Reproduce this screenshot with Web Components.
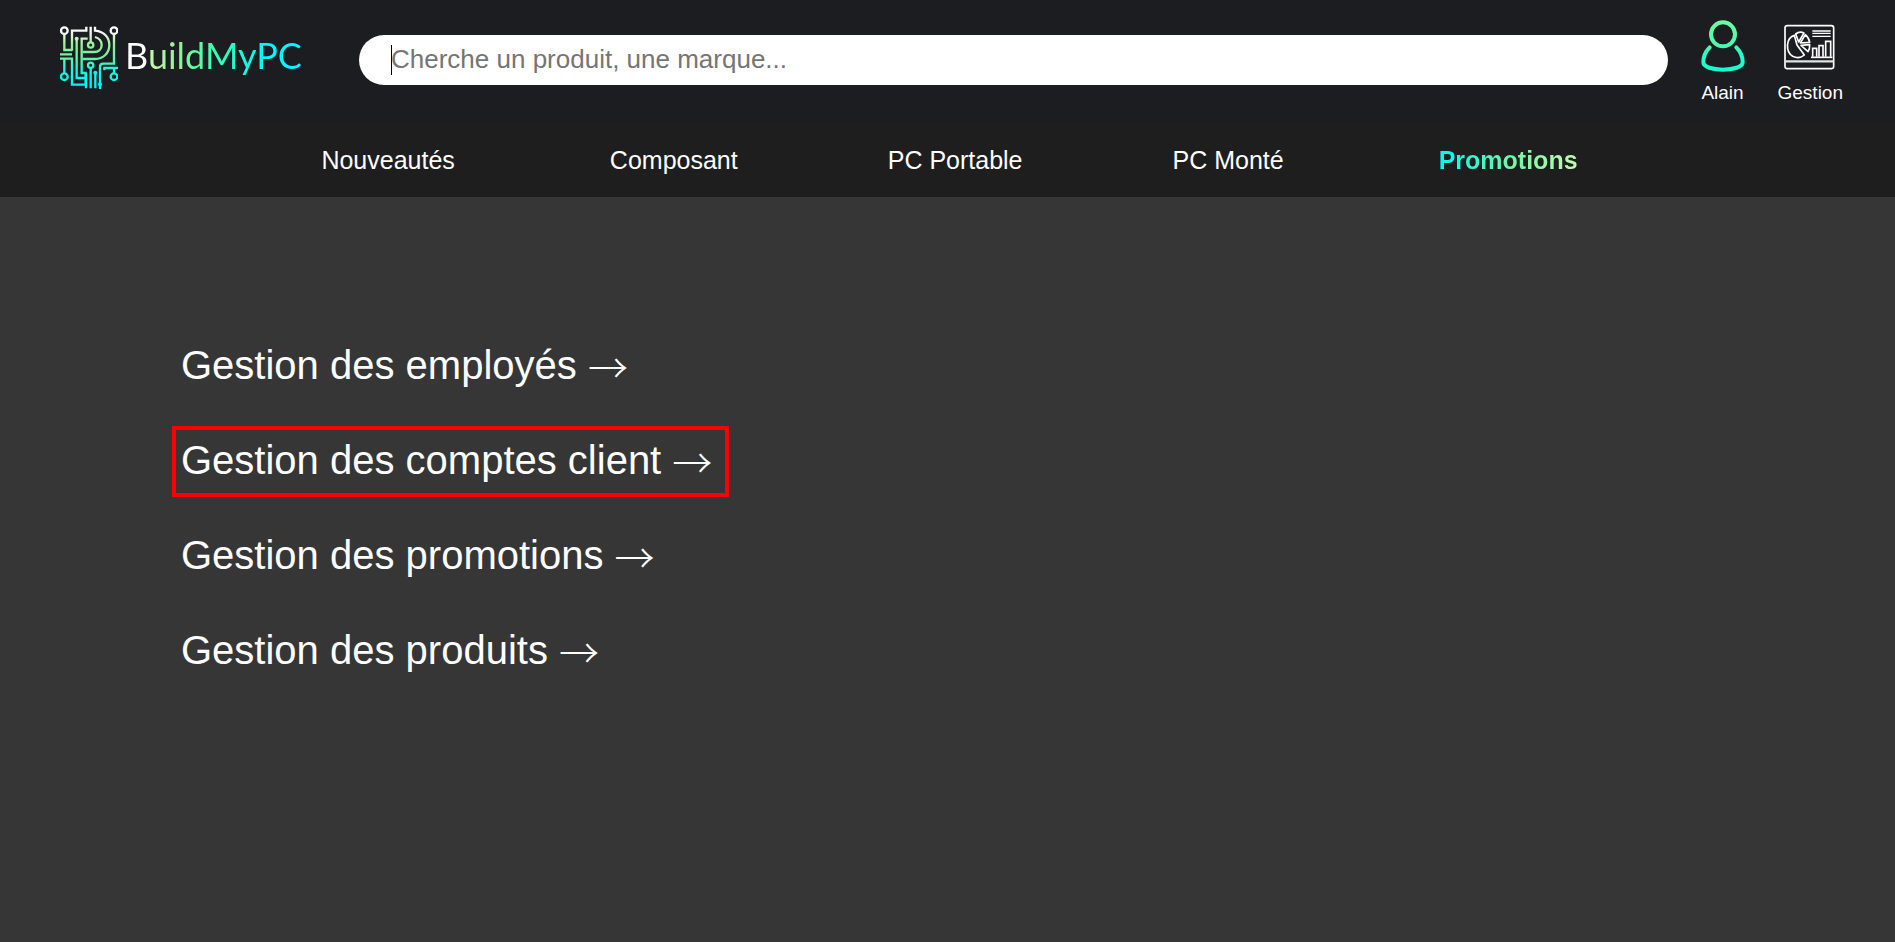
<!DOCTYPE html>
<html lang="fr">
<head>
<meta charset="utf-8">
<title>BuildMyPC – Gestion</title>
<style>
  html, body { margin: 0; min-height: 100%; background: #363636; color: #fff; font-family: Arial, "Liberation Sans", sans-serif; }
  .arrow { font-family: "Noto Sans CJK SC", sans-serif; font-weight: 300; line-height: 0; vertical-align: -4px; }
</style>
</head>
<body>
<site-header>
  <brand-logo slot="brand"></brand-logo>
  <product-search slot="search"></product-search>
  <header-action slot="actions" label="Alain">
    <svg width="44" height="52" viewBox="0 0 132 156" fill="none" stroke-width="12" stroke-linecap="round">
      <defs><linearGradient id="user-tint" gradientUnits="userSpaceOnUse" x1="0" y1="0" x2="0" y2="156"><stop offset="0" stop-color="#6dffa0"/><stop offset=".55" stop-color="#48f7b0"/><stop offset=".6" stop-color="#2affcb"/><stop offset="1" stop-color="#14ffcf"/></linearGradient></defs>
      <g stroke="url(#user-tint)"><circle cx="66" cy="43" r="36"/><path d="M26 82C14 94 7 112 7 127C7 141 35 149 66 149S125 141 125 127C125 112 118 94 106 82"/></g>
    </svg>
  </header-action>
  <header-action slot="actions" label="Gestion">
    <svg width="52" height="52" viewBox="0 0 156 156" fill="none" stroke="#fff">
      <rect x="3" y="17" width="146" height="129" rx="7" stroke-width="5"/>
      <path d="M3 124H149" stroke-width="7" stroke="#dce5df"/>
      <path d="M85 33H140M85 40H140M85 49H140" stroke-width="4"/>
      <path d="M81 112H145" stroke-width="5"/>
      <path d="M86 110V85H98V110M105 110V77H117V110M125 110V64H140V110" stroke-width="5"/>
      <g stroke-width="5" stroke-linejoin="round"><path d="M31 46C4 54 5 97 26 109C39 115 52 113 61 105L39 75Z"/><path d="M44 66L35 42Q46 33 60 39Z"/><path d="M49 69L64 44Q75 53 77 67Z"/><path d="M51 76L77 74Q78 87 72 95Z"/></g>
    </svg>
  </header-action>
</site-header>
<main-nav></main-nav>
<main>
  <admin-menu>
    <admin-link href="#employes">Gestion des employés <span class="arrow">→</span></admin-link>
    <admin-link href="#clients" highlighted>Gestion des comptes client <span class="arrow">→</span></admin-link>
    <admin-link href="#promotions">Gestion des promotions <span class="arrow">→</span></admin-link>
    <admin-link href="#produits">Gestion des produits <span class="arrow">→</span></admin-link>
  </admin-menu>
</main>

<script>
const define = (name, html, setup) => customElements.define(name, class extends HTMLElement {
  constructor() {
    super();
    this.attachShadow({ mode: "open" }).innerHTML = html;
  }
  connectedCallback() { if (setup) setup(this, this.shadowRoot); }
});

define("site-header", `
  <style>
    :host { display: block; background: #1c1d21; }
    header { display: flex; align-items: flex-start; box-sizing: border-box; min-height: 122px; padding: 20px 52px 16px 60px; }
    .search { flex: 1; margin: 15px 33px 0 57px; }
    .actions { display: flex; gap: 33px; }
  </style>
  <header>
    <slot name="brand"></slot>
    <div class="search"><slot name="search"></slot></div>
    <div class="actions"><slot name="actions"></slot></div>
  </header>`);

define("brand-logo", `
  <style>
    :host { display: block; flex: none; }
    a { display: flex; align-items: center; gap: 7px; padding-top: 6px; text-decoration: none; }
    svg { flex: none; }
    span { width: 177px; font: 36px/44px Lato, sans-serif; margin-bottom: 6px; color: transparent; background: linear-gradient(90deg, #fff 12%, #c3f7b0 13%, #8df58f 30%, #3dffb0 50%, #1effd0 62%, #00f8ff 78%); background-clip: text; -webkit-background-clip: text; }
  </style>
  <a href="#accueil">
    <svg width="58" height="63" viewBox="30 33 174 189" fill="none" aria-hidden="true">
      <defs><linearGradient id="g" gradientUnits="userSpaceOnUse" x1="0" y1="35" x2="0" y2="220"><stop offset="0" stop-color="#fff"/><stop offset=".1" stop-color="#f2f8f0"/><stop offset=".28" stop-color="#9af09a"/><stop offset=".5" stop-color="#66f5a4"/><stop offset=".7" stop-color="#1cf5dc"/><stop offset="1" stop-color="#00f2ff"/></linearGradient></defs>
      <g stroke="url(#g)" stroke-width="7">
        <circle cx="43" cy="47" r="10"/><circle cx="192" cy="47" r="10"/>
        <circle cx="43" cy="185" r="10"/><circle cx="192" cy="185" r="10"/>
        <circle cx="122" cy="90" r="8"/><circle cx="122" cy="151" r="8"/>
        <path d="M43 57V105H66M30 118H66M30 131H66V209H107V174H95V71H113"/>
        <path d="M43 131V175M66 107V47H109V35"/>
        <path d="M80 71V189H107"/>
        <path d="M122 35V81M135 35V47C164 50 178 68 178 90C178 116 158 132 135 132H98"/>
        <path d="M135 66C148 70 155 78 155 90C155 103 146 111 132 111H98"/>
        <path d="M192 57V146H160Q150 146 150 155V222M204 159H163V166M192 159V175"/>
        <path d="M122 161V220M108 174V220M136 173V220"/>
      </g>
      <g fill="url(#g)"><circle cx="80" cy="71" r="6"/><circle cx="136" cy="173" r="6"/><circle cx="150" cy="208" r="6"/></g>
    </svg>
    <span>BuildMyPC</span>
  </a>`);

define("product-search", `
  <style>
    :host { display: block; }
    input { display: block; width: 100%; height: 50px; box-sizing: border-box; margin: 0; padding: 0 32px 2px; border: 0; border-radius: 25px; outline: 0; color: #222;
      background: linear-gradient(#000, #000) 32px 10px / 1px 30px no-repeat, #fff; font: 26px/30px Arial, "Liberation Sans", sans-serif; }
    input::placeholder { color: #757575; }
  </style>
  <input type="search" placeholder="Cherche un produit, une marque..." aria-label="Cherche un produit, une marque">`);

define("header-action", `
  <style>
    :host { display: block; }
    a { display: flex; flex-direction: column; align-items: center; gap: 10px; color: #fff; font-size: 19px; line-height: 22px; text-decoration: none; }
  </style>
  <a href="#"><slot></slot><span></span></a>`,
  (host, root) => { root.querySelector("span").textContent = host.getAttribute("label"); });

define("main-nav", `
  <style>
    :host { display: block; background: #1e1e1e; }
    ul { display: flex; justify-content: center; gap: 150px; margin: 0; padding: 24px 0 23px 4px; list-style: none; }
    li:first-child { padding-right: 5px; }
    li:last-child { padding-left: 5px; }
    a { display: block; color: #fff; font-size: 25px; line-height: 28px; text-decoration: none; white-space: nowrap; }
    .promo { font-weight: 700; color: transparent; background: linear-gradient(90deg, #00f8f4, #74f9a4 55%, #c8f8b4); background-clip: text; -webkit-background-clip: text; }
  </style>
  <nav><ul>
    <li><a href="#nouveautes">Nouveautés</a></li>
    <li><a href="#composant">Composant</a></li>
    <li><a href="#portable">PC Portable</a></li>
    <li><a href="#monte">PC Monté</a></li>
    <li><a class="promo" href="#promos">Promotions</a></li>
  </ul></nav>`);

define("admin-menu", `
  <style>
    :host { display: flex; flex-direction: column; align-items: flex-start; gap: 24px; padding: 134px 172px; }
  </style>
  <slot></slot>`);

define("admin-link", `
  <style>
    :host { display: block; border: 4px solid transparent; }
    :host([highlighted]) { border-color: #f00; }
    a { display: block; padding: 7px 13px 10px 5px; color: #fff; font-size: 40px; line-height: 46px; text-decoration: none; }
  </style>
  <a><slot></slot></a>`,
  (host, root) => { root.querySelector("a").href = host.getAttribute("href"); });
</script>
</body>
</html>
